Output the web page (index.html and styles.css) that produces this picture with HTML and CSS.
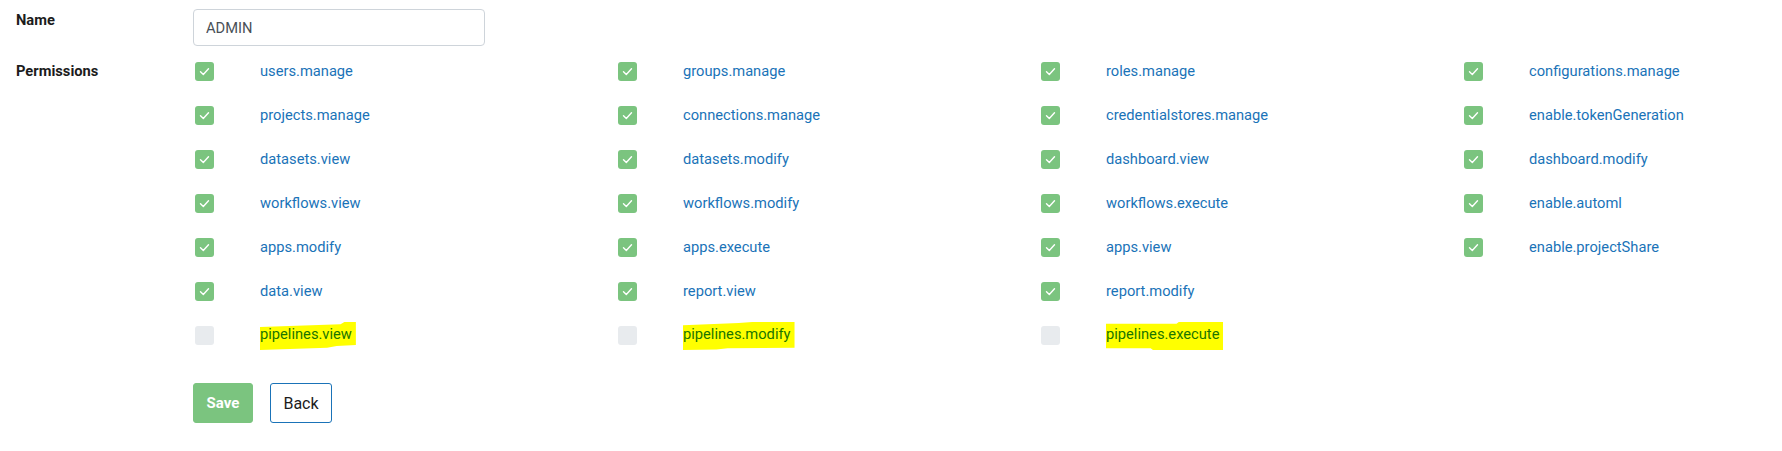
FILE: index.html
```html
<!DOCTYPE html>
<html lang="en">
<head>
<meta charset="utf-8">
<title>Role</title>
<link rel="stylesheet" href="styles.css">
</head>
<body>
<form class="page">
  <div class="form-row name-row">
    <label class="row-label">Name</label>
    <div class="row-body">
      <input class="text-input" type="text" value="ADMIN">
    </div>
  </div>
  <div class="form-row perm-row">
    <label class="row-label">Permissions</label>
    <div class="row-body">
      <div class="perm-grid">
        <div class="perm"><span class="cb on"><svg viewBox="0 0 19 19"><polyline points="5.5,9.8 8.3,12.5 13.5,6.8"/></svg></span><a class="perm-name">users.manage</a></div>
        <div class="perm"><span class="cb on"><svg viewBox="0 0 19 19"><polyline points="5.5,9.8 8.3,12.5 13.5,6.8"/></svg></span><a class="perm-name">groups.manage</a></div>
        <div class="perm"><span class="cb on"><svg viewBox="0 0 19 19"><polyline points="5.5,9.8 8.3,12.5 13.5,6.8"/></svg></span><a class="perm-name">roles.manage</a></div>
        <div class="perm"><span class="cb on"><svg viewBox="0 0 19 19"><polyline points="5.5,9.8 8.3,12.5 13.5,6.8"/></svg></span><a class="perm-name">configurations.manage</a></div>

        <div class="perm"><span class="cb on"><svg viewBox="0 0 19 19"><polyline points="5.5,9.8 8.3,12.5 13.5,6.8"/></svg></span><a class="perm-name">projects.manage</a></div>
        <div class="perm"><span class="cb on"><svg viewBox="0 0 19 19"><polyline points="5.5,9.8 8.3,12.5 13.5,6.8"/></svg></span><a class="perm-name">connections.manage</a></div>
        <div class="perm"><span class="cb on"><svg viewBox="0 0 19 19"><polyline points="5.5,9.8 8.3,12.5 13.5,6.8"/></svg></span><a class="perm-name">credentialstores.manage</a></div>
        <div class="perm"><span class="cb on"><svg viewBox="0 0 19 19"><polyline points="5.5,9.8 8.3,12.5 13.5,6.8"/></svg></span><a class="perm-name">enable.tokenGeneration</a></div>

        <div class="perm"><span class="cb on"><svg viewBox="0 0 19 19"><polyline points="5.5,9.8 8.3,12.5 13.5,6.8"/></svg></span><a class="perm-name">datasets.view</a></div>
        <div class="perm"><span class="cb on"><svg viewBox="0 0 19 19"><polyline points="5.5,9.8 8.3,12.5 13.5,6.8"/></svg></span><a class="perm-name">datasets.modify</a></div>
        <div class="perm"><span class="cb on"><svg viewBox="0 0 19 19"><polyline points="5.5,9.8 8.3,12.5 13.5,6.8"/></svg></span><a class="perm-name">dashboard.view</a></div>
        <div class="perm"><span class="cb on"><svg viewBox="0 0 19 19"><polyline points="5.5,9.8 8.3,12.5 13.5,6.8"/></svg></span><a class="perm-name">dashboard.modify</a></div>

        <div class="perm"><span class="cb on"><svg viewBox="0 0 19 19"><polyline points="5.5,9.8 8.3,12.5 13.5,6.8"/></svg></span><a class="perm-name">workflows.view</a></div>
        <div class="perm"><span class="cb on"><svg viewBox="0 0 19 19"><polyline points="5.5,9.8 8.3,12.5 13.5,6.8"/></svg></span><a class="perm-name">workflows.modify</a></div>
        <div class="perm"><span class="cb on"><svg viewBox="0 0 19 19"><polyline points="5.5,9.8 8.3,12.5 13.5,6.8"/></svg></span><a class="perm-name">workflows.execute</a></div>
        <div class="perm"><span class="cb on"><svg viewBox="0 0 19 19"><polyline points="5.5,9.8 8.3,12.5 13.5,6.8"/></svg></span><a class="perm-name">enable.automl</a></div>

        <div class="perm"><span class="cb on"><svg viewBox="0 0 19 19"><polyline points="5.5,9.8 8.3,12.5 13.5,6.8"/></svg></span><a class="perm-name">apps.modify</a></div>
        <div class="perm"><span class="cb on"><svg viewBox="0 0 19 19"><polyline points="5.5,9.8 8.3,12.5 13.5,6.8"/></svg></span><a class="perm-name">apps.execute</a></div>
        <div class="perm"><span class="cb on"><svg viewBox="0 0 19 19"><polyline points="5.5,9.8 8.3,12.5 13.5,6.8"/></svg></span><a class="perm-name">apps.view</a></div>
        <div class="perm"><span class="cb on"><svg viewBox="0 0 19 19"><polyline points="5.5,9.8 8.3,12.5 13.5,6.8"/></svg></span><a class="perm-name">enable.projectShare</a></div>

        <div class="perm"><span class="cb on"><svg viewBox="0 0 19 19"><polyline points="5.5,9.8 8.3,12.5 13.5,6.8"/></svg></span><a class="perm-name">data.view</a></div>
        <div class="perm"><span class="cb on"><svg viewBox="0 0 19 19"><polyline points="5.5,9.8 8.3,12.5 13.5,6.8"/></svg></span><a class="perm-name">report.view</a></div>
        <div class="perm"><span class="cb on"><svg viewBox="0 0 19 19"><polyline points="5.5,9.8 8.3,12.5 13.5,6.8"/></svg></span><a class="perm-name">report.modify</a></div>
        <div class="perm empty"></div>

        <div class="perm"><span class="cb off"></span><a class="perm-name marked m1">pipelines.view</a></div>
        <div class="perm"><span class="cb off"></span><a class="perm-name marked m2">pipelines.modify</a></div>
        <div class="perm"><span class="cb off"></span><a class="perm-name marked m3">pipelines.execute</a></div>
      </div>
      <div class="actions">
        <button type="button" class="btn btn-save">Save</button>
        <button type="button" class="btn btn-back">Back</button>
      </div>
    </div>
  </div>
</form>
</body>
</html>
```

FILE: styles.css
```css
html, body {
  margin: 0;
  padding: 0;
  background: #ffffff;
  overflow: hidden;
}

body {
  font-family: Roboto, "Liberation Sans", Arial, sans-serif;
  font-size: 14.7px;
  line-height: 21px;
  color: #212529;
}

.page {
  padding: 10px 16px 0 16px;
}

.form-row {
  display: flex;
  align-items: flex-start;
}

.row-label {
  width: 177px;
  flex: none;
  font-weight: 700;
  color: #1c1c1c;
}

.row-body {
  flex: 1;
  min-width: 0;
}

.name-row .row-body {
  margin-top: -1px;
}

.perm-row {
  margin-top: 15px;
}

.text-input {
  box-sizing: border-box;
  width: 292px;
  height: 37px;
  padding: 0 12px;
  border: 1px solid #ced4da;
  border-radius: 4px;
  font-family: Roboto, "Liberation Sans", Arial, sans-serif;
  font-size: 14.7px;
  color: #495057;
  background: #fff;
  outline: none;
}

.perm-grid {
  display: grid;
  grid-template-columns: repeat(3, 423px) 1fr;
  row-gap: 23px;
}

.perm {
  display: flex;
  align-items: center;
  height: 21px;
  padding-left: 2px;
}

.cb {
  flex: none;
  width: 19px;
  height: 19px;
  border-radius: 3px;
  margin-right: 46px;
  display: flex;
}

.cb.on {
  background: #7bc47f;
}

.cb.off {
  background: #e8ebee;
}

.cb svg {
  width: 19px;
  height: 19px;
  fill: none;
  stroke: #ffffff;
  stroke-width: 1.4;
  stroke-linecap: round;
  stroke-linejoin: round;
}

.perm-name {
  color: #1a73b8;
  text-decoration: none;
  white-space: nowrap;
}

.marked {
  color: #1a7500;
  background: #ffff00;
  padding: 2px 4px 5px 0;
  margin-top: 1px;
}

.m1 {
  clip-path: polygon(0 18%, 84% 8%, 88% 0, 100% 0, 100% 82%, 80% 86%, 70% 92%, 0 100%);
}

.m2 {
  clip-path: polygon(0 12%, 50% 4%, 62% 0, 100% 0, 100% 92%, 40% 94%, 30% 98%, 0 100%);
}

.m3 {
  clip-path: polygon(0 6%, 60% 6%, 62% 0, 100% 0, 100% 100%, 40% 100%, 38% 94%, 0 94%);
}

.actions {
  display: flex;
  gap: 17px;
  margin-top: 37px;
}

.btn {
  box-sizing: border-box;
  height: 40px;
  border-radius: 3px;
  font-family: Roboto, "Liberation Sans", Arial, sans-serif;
  cursor: pointer;
}

.btn-save {
  width: 60px;
  background: #7bc47f;
  border: 1px solid #7bc47f;
  color: #ffffff;
  font-weight: 700;
  font-size: 15px;
}

.btn-back {
  width: 62px;
  background: #ffffff;
  border: 1px solid #1a73b8;
  color: #1c1c1c;
  font-size: 16px;
}
```
